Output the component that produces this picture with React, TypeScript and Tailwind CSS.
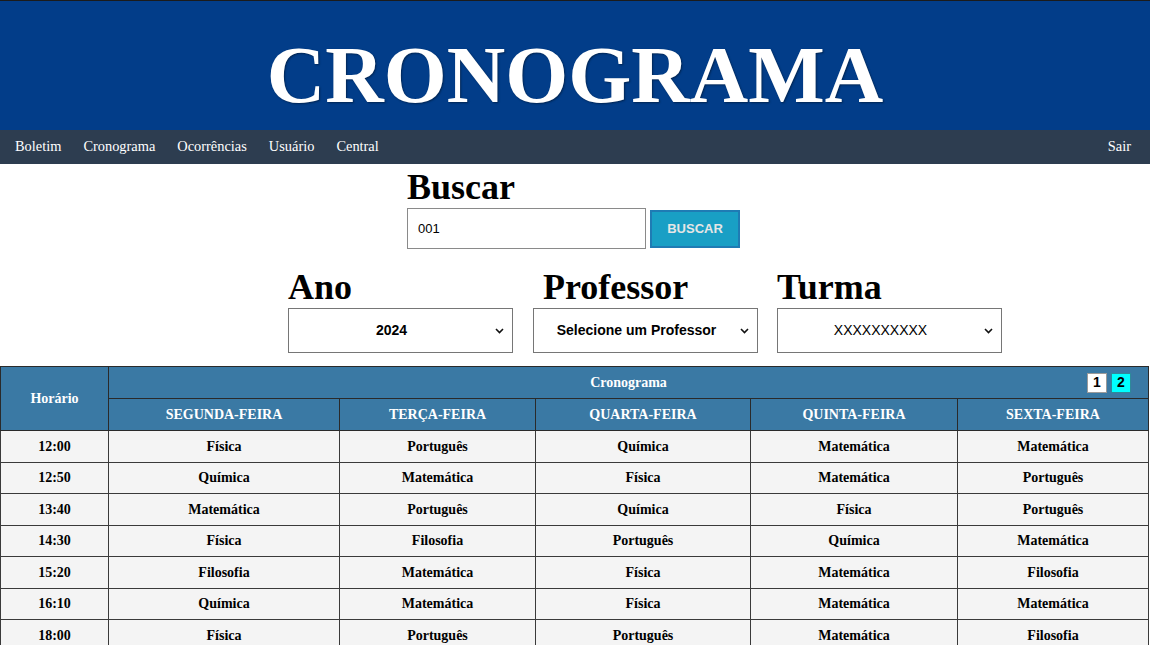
import { useState } from "react";

const dias = ["SEGUNDA-FEIRA", "TERÇA-FEIRA", "QUARTA-FEIRA", "QUINTA-FEIRA", "SEXTA-FEIRA"];

const aulas: [string, string[]][] = [
  ["12:00", ["Física", "Português", "Química", "Matemática", "Matemática"]],
  ["12:50", ["Química", "Matemática", "Física", "Matemática", "Português"]],
  ["13:40", ["Matemática", "Português", "Química", "Física", "Português"]],
  ["14:30", ["Física", "Filosofia", "Português", "Química", "Matemática"]],
  ["15:20", ["Filosofia", "Matemática", "Física", "Matemática", "Filosofia"]],
  ["16:10", ["Química", "Matemática", "Física", "Matemática", "Matemática"]],
  ["18:00", ["Física", "Português", "Português", "Matemática", "Filosofia"]],
];

const menu = ["Boletim", "Cronograma", "Ocorrências", "Usuário", "Central"];

function Chevron() {
  return (
    <svg
      className="pointer-events-none absolute right-[9px] top-1/2 -translate-y-1/2"
      width="9"
      height="6"
      viewBox="0 0 9 6"
      fill="none"
    >
      <path d="M1 1l3.5 3.5L8 1" stroke="#111" strokeWidth="1.6" />
    </svg>
  );
}

function Campo({
  label,
  value,
  options,
  bold = true,
  labelClass = "",
}: {
  label: string;
  value: string;
  options: string[];
  bold?: boolean;
  labelClass?: string;
}) {
  return (
    <div className="flex w-[225px] flex-col">
      <h2 className={`text-[36px] font-bold leading-none text-black ${labelClass}`}>{label}</h2>
      <div className="relative mt-[3px]">
        <select
          defaultValue={value}
          className={`h-[45px] w-full appearance-none border border-[#767676] bg-white pr-[18px] font-['Liberation_Sans',Arial,sans-serif] text-[14px] text-black [text-align-last:center] ${bold ? "font-bold" : "font-normal"}`}
        >
          {options.map((o) => (
            <option key={o}>{o}</option>
          ))}
        </select>
        <Chevron />
      </div>
    </div>
  );
}

export default function App() {
  const [busca, setBusca] = useState("001");
  const [pagina, setPagina] = useState(2);

  return (
    <div className="min-h-screen w-[1150px] bg-white font-['Liberation_Serif','Times_New_Roman',serif]">
      {/* Topo */}
      <header className="flex h-[130px] items-center justify-center border-t border-[#1b1b1b] bg-[#023d89]">
        <h1 className="pt-[20px] text-[81px] font-bold leading-none text-white [text-shadow:1px_1px_2px_rgba(0,0,0,0.4)]">
          CRONOGRAMA
        </h1>
      </header>

      <nav className="flex h-[34px] items-center justify-between bg-[#2d3d50] px-[4px] text-[14.4px] text-white">
        <div className="flex">
          {menu.map((m) => (
            <a key={m} href="#" className="px-[11px]">
              {m}
            </a>
          ))}
        </div>
        <a href="#" className="px-[15px]">
          Sair
        </a>
      </nav>

      {/* Busca */}
      <section className="flex justify-center pt-[5px]">
        <div className="ml-[-3px] flex flex-col">
          <h2 className="text-[36px] font-bold leading-none text-black">Buscar</h2>
          <div className="mt-[3px] flex items-center gap-[4px]">
            <input
              value={busca}
              onChange={(e) => setBusca(e.target.value)}
              className="h-[41px] w-[239px] border border-[#8a8a8a] bg-white px-[10px] font-['Liberation_Sans',Arial,sans-serif] text-[13px] text-black outline-none"
            />
            <button className="h-[38px] w-[90px] border-2 border-[#1f7bb4] bg-[#199fc5] font-['Liberation_Sans',Arial,sans-serif] text-[13px] font-bold text-[#e6e6e6]">
              BUSCAR
            </button>
          </div>
        </div>
      </section>

      {/* Filtros */}
      <section className="flex pl-[288px] pt-[20px]">
        <Campo label="Ano" value="2024" options={["2024", "2023", "2022"]} />
        <div className="ml-[20px]">
          <Campo
            label="Professor"
            value="Selecione um Professor"
            options={["Selecione um Professor"]}
            labelClass="ml-[10px]"
          />
        </div>
        <div className="ml-[19px]">
          <Campo label="Turma" value="XXXXXXXXXX" options={["XXXXXXXXXX"]} bold={false} />
        </div>
      </section>

      {/* Tabela */}
      <table className="mt-[13px] w-[1148px] table-fixed border-collapse text-[14px]">
        <colgroup>
          <col className="w-[108px]" />
          <col className="w-[231px]" />
          <col className="w-[196px]" />
          <col className="w-[215px]" />
          <col className="w-[207px]" />
          <col className="w-[191px]" />
        </colgroup>
        <thead className="bg-[#3a79a4] font-bold text-white">
          <tr className="h-[32px]">
            <th rowSpan={2} className="border border-[#2a2a2a]">
              Horário
            </th>
            <th colSpan={5} className="relative border border-[#2a2a2a]">
              Cronograma
              <div className="absolute right-[17px] top-1/2 flex -translate-y-1/2 gap-[4px] font-['Liberation_Sans',Arial,sans-serif] text-black">
                {[1, 2].map((n) => (
                  <button
                    key={n}
                    onClick={() => setPagina(n)}
                    className={`flex h-[20px] w-[20px] items-center justify-center border text-[14px] font-bold ${
                      pagina === n ? "border-[#2d8a9a] bg-[#00ffff]" : "border-[#9a9a9a] bg-white"
                    }`}
                  >
                    {n}
                  </button>
                ))}
              </div>
            </th>
          </tr>
          <tr className="h-[32px]">
            {dias.map((d) => (
              <th key={d} className="border border-[#2a2a2a]">
                {d}
              </th>
            ))}
          </tr>
        </thead>
        <tbody className="bg-[#f4f4f4] font-bold text-black">
          {aulas.map(([hora, materias]) => (
            <tr key={hora} className="h-[31.5px]">
              <td className="border border-[#3a3a3a] text-center">{hora}</td>
              {materias.map((m, i) => (
                <td key={i} className="border border-[#3a3a3a] text-center">
                  {m}
                </td>
              ))}
            </tr>
          ))}
        </tbody>
      </table>
    </div>
  );
}
